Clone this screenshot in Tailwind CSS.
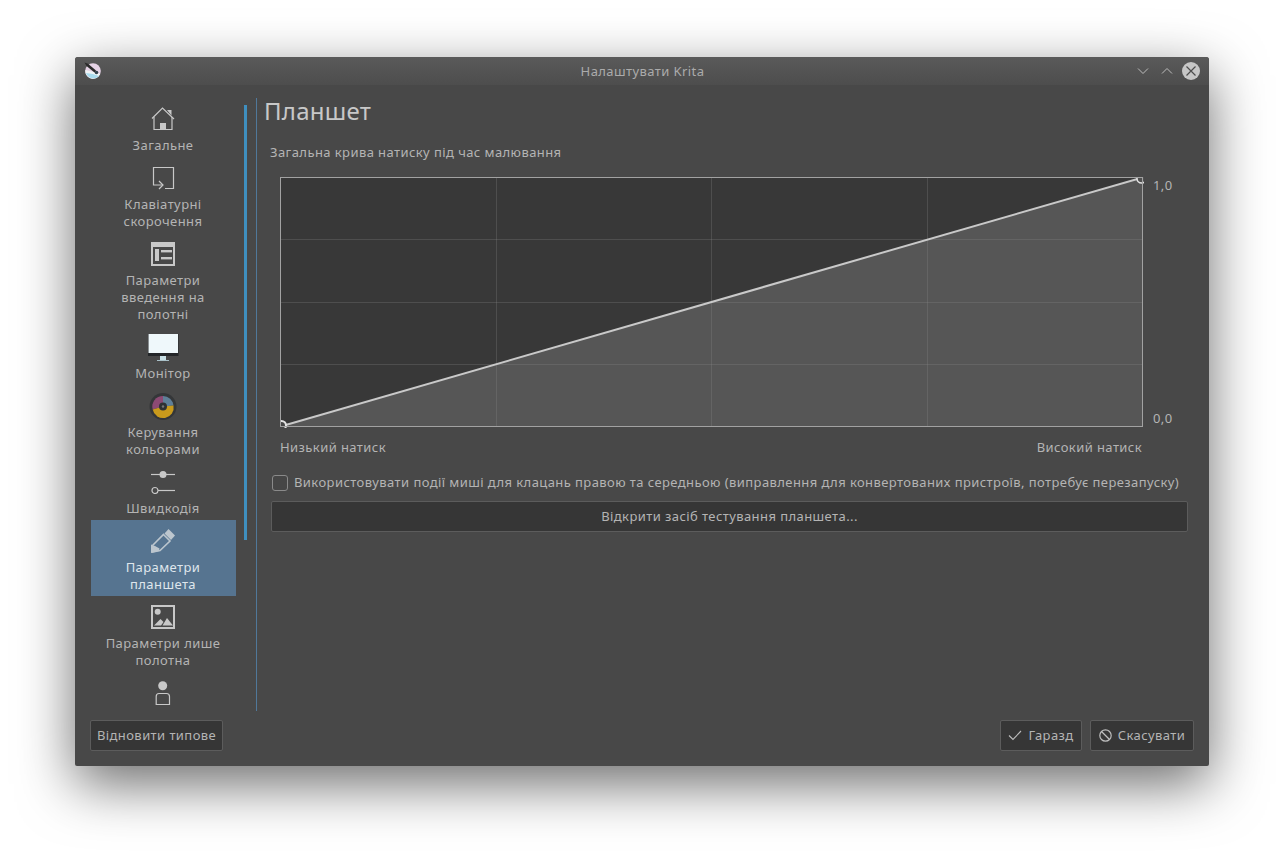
<!DOCTYPE html>
<html>
<head>
<meta charset="utf-8">
<script src="https://cdn.jsdelivr.net/npm/@tailwindcss/browser@4"></script>
</head>
<body class="w-[1284px] h-[859px] overflow-hidden bg-white font-['Noto_Sans',sans-serif] text-[13px] leading-[17px] tracking-[0.42px] text-[#b4b4b4]">
<div class="ml-[75px] mt-[57px] w-[1134px] h-[709px] flex flex-col bg-[#484848] rounded-t-[3px] rounded-b-[2px] shadow-[0_18px_55px_rgba(0,0,0,0.58)]">
  <!-- title bar -->
  <div class="h-[28px] shrink-0 flex items-center pl-[10px] pr-[9px] rounded-t-[3px] bg-gradient-to-b from-[#5a5a5a] to-[#4d4d4d]">
    <div class="flex-1 flex items-center">
      <svg class="w-[16px] h-[16px] overflow-visible" viewBox="0 0 16 16"><circle cx="8" cy="8" r="7.8" fill="#e6d3e6"/><path d="M0.3 7A7.8 7.8 0 0 0 15.2 11L9 9Z" fill="#f0f4f6"/><path d="M1 10A7.8 7.8 0 0 0 14 13L8 11Z" fill="#a9dbee"/><path d="M-0.5 -0.5L3 0.8L11 7.5L9.5 9.5L1.5 3Z" fill="#2a2a2a"/><circle cx="11.5" cy="9.5" r="1.8" fill="#33414d"/></svg>
    </div>
    <div class="text-center text-[#ababab]">Налаштувати Krita</div>
    <div class="flex-1 flex items-center justify-end">
      <svg class="w-[12px] h-[8px] mr-[12px]" viewBox="0 0 12 8" fill="none" stroke="#bdbdbd"><path d="M1 1.5L6 6.5L11 1.5"/></svg>
      <svg class="w-[12px] h-[8px] mr-[9px]" viewBox="0 0 12 8" fill="none" stroke="#bdbdbd"><path d="M1 6.5L6 1.5L11 6.5"/></svg>
      <svg class="w-[18px] h-[18px]" viewBox="0 0 18 18"><circle cx="9" cy="9" r="9" fill="#c6c6c6"/><path d="M4.5 4.5L13.5 13.5M13.5 4.5L4.5 13.5" stroke="#4c4c4c" stroke-width="1.2"/></svg>
    </div>
  </div>
  <!-- main row -->
  <div class="h-[613px] mt-[13px] ml-[16px] shrink-0 flex">
    <div class="w-[145px] shrink-0 overflow-hidden flex flex-col text-center">
      <div class="shrink-0 pt-[9px] pb-[3px] pr-[1px] flex flex-col items-center gap-[6px]">
        <svg class="w-[24px] h-[24px]" viewBox="0 0 24 24" fill="none" stroke="#c8c8c8" stroke-width="1.2"><path d="M1 11.5L11.5 1L23 12"/><path d="M3 10V22.5H21V10"/><path d="M16 3H20.5V8.5Z" fill="#c8c8c8" stroke="none"/><rect x="9" y="16" width="6" height="6.5" fill="#c8c8c8" stroke="none"/></svg>
        <div>Загальне</div>
      </div>
      <div class="shrink-0 pt-[9px] pb-[3px] pr-[1px] flex flex-col items-center gap-[6px]">
        <svg class="w-[24px] h-[24px]" viewBox="0 0 24 24" fill="none" stroke="#c8c8c8" stroke-width="1.2"><path d="M14 22.5H22.5V1.5H2.5V19H12"/><path d="M8 15L12 19L8 23"/></svg>
        <div>Клавіатурні<br>скорочення</div>
      </div>
      <div class="shrink-0 pt-[9px] pb-[3px] pr-[1px] flex flex-col items-center gap-[6px]">
        <svg class="w-[24px] h-[24px]" viewBox="0 0 24 24"><rect width="24" height="24" fill="#c8c8c8"/><rect x="2" y="5" width="20" height="17" fill="#484848"/><rect x="4" y="7" width="4" height="12" fill="#c8c8c8"/><rect x="10" y="8" width="11" height="2.4" fill="#c8c8c8"/><rect x="10" y="15" width="11" height="2.4" fill="#c8c8c8"/></svg>
        <div>Параметри<br>введення на<br>полотні</div>
      </div>
      <div class="shrink-0 pt-[9px] pb-[3px] pr-[1px] flex flex-col items-center gap-[6px]">
        <svg class="w-[32px] h-[24px] overflow-visible" viewBox="0 1 32 24"><rect x="1" y="0" width="30.5" height="22" fill="#232629"/><rect x="1.5" y="0" width="29.5" height="19" fill="#eff8fb"/><rect x="13" y="22" width="6" height="4" fill="#c8e0e6"/><rect x="10" y="26" width="12" height="1" fill="#a9c0c8"/></svg>
        <div>Монітор</div>
      </div>
      <div class="shrink-0 pt-[9px] pb-[3px] pr-[1px] flex flex-col items-center gap-[6px]">
        <svg class="w-[28px] h-[24px] overflow-visible" viewBox="0 0 28 24"><circle cx="14" cy="12.5" r="13.5" fill="#343638"/><path d="M14 12.5L3.7 15.5A10.5 10.5 0 0 1 14 2Z" fill="#8c4a74"/><path d="M14 12.5V2A10.5 10.5 0 0 1 24.5 11.5Z" fill="#5f7f98"/><path d="M14 12.5L24.5 11.5A10.5 10.5 0 0 1 3.7 15.5Z" fill="#c99a1c"/><circle cx="14" cy="12.5" r="4" fill="#2f3133"/><circle cx="14" cy="12.5" r="1.2" fill="#777"/></svg>
        <div>Керування<br>кольорами</div>
      </div>
      <div class="shrink-0 pt-[9px] pb-[3px] pr-[1px] flex flex-col items-center gap-[6px]">
        <svg class="w-[24px] h-[24px]" viewBox="0 0 24 24" fill="none" stroke="#c8c8c8" stroke-width="1.2"><path d="M0 4.5H24"/><circle cx="12" cy="4.5" r="3.5" fill="#c8c8c8" stroke="none"/><path d="M7 20.5H24"/><circle cx="4" cy="20.5" r="3"/></svg>
        <div>Швидкодія</div>
      </div>
      <div class="shrink-0 pt-[9px] pb-[3px] pr-[1px] flex flex-col items-center gap-[6px] bg-[#567490] text-[#dfe6ec]">
        <svg class="w-[24px] h-[24px]" viewBox="0 0 24 24" fill="none"><path d="M17.5 0L24 6.5L20 11L13.5 4.5Z" fill="#bcc6ce"/><path d="M12.5 5.5L19 12L9 21.5L1.5 23V16.5Z" stroke="#bcc6ce" stroke-width="1.6"/><path d="M0 24V15.5L4 17L8.5 19.5L8 22Z" fill="#bcc6ce"/></svg>
        <div>Параметри<br>планшета</div>
      </div>
      <div class="shrink-0 pt-[9px] pb-[3px] pr-[1px] flex flex-col items-center gap-[6px]">
        <svg class="w-[24px] h-[24px]" viewBox="0 0 24 24"><rect x="1" y="1" width="22" height="22" fill="none" stroke="#c8c8c8" stroke-width="2"/><circle cx="6.7" cy="6.7" r="3" fill="#c8c8c8"/><path d="M3 20.5L9.5 14L12.5 17L10 20.5Z" fill="#c8c8c8"/><path d="M11.5 20.5L16 13L22 20.5Z" fill="#c8c8c8"/></svg>
        <div>Параметри лише<br>полотна</div>
      </div>
      <div class="shrink-0 pt-[9px] pb-[3px] pr-[1px] flex flex-col items-center gap-[6px]">
        <svg class="w-[24px] h-[24px]" viewBox="0 0 24 24"><circle cx="11.7" cy="4.7" r="4.5" fill="#c8c8c8"/><path d="M5.2 23.5V15.5Q5.2 12.5 8 12.5H15.5Q18.5 12.5 18.5 15.5V23.5Z" fill="none" stroke="#c8c8c8" stroke-width="1.2"/></svg>
      </div>
    </div>
    <!-- scrollbar -->
    <div class="w-[3px] h-[435px] ml-[8px] mt-[7px] shrink-0 bg-[#3f8fbf]"></div>
    <div class="w-[1px] ml-[9px] shrink-0 bg-[#50789a]"></div>
    <!-- content -->
    <div class="ml-[7px] flex-1 flex flex-col min-w-0">
      <div class="text-[24px] leading-[30px] -mt-[2px] tracking-[0.25px] text-[#c8c8c8]">Планшет</div>
      <div class="ml-[6px] mt-[18px]">Загальна крива натиску під час малювання</div>
      <div class="ml-[16px] mt-[16px] flex">
        <svg class="w-[864px] h-[251px] shrink-0" viewBox="0 0 864 251">
          <rect x="0.5" y="0.5" width="862" height="249" fill="#383838"/>
          <path d="M0.5 249.5L862.5 0.5V249.5Z" fill="#565656"/>
          <path d="M216.5 0V250M431.5 0V250M647.5 0V250M0 62.5H863M0 125.5H863M0 187.5H863" stroke="#8a8a8a" stroke-opacity="0.28" fill="none"/>
          <path d="M0.5 249.5L862.5 0.5" stroke="#c9c9c9" stroke-width="2" fill="none"/>
          <circle cx="1.5" cy="248.5" r="4.5" fill="#484848" stroke="#e4e4e4" stroke-width="2"/>
          <circle cx="861.5" cy="1.5" r="4.5" fill="#505050" stroke="#e4e4e4" stroke-width="1.5"/>
          <rect x="0.5" y="0.5" width="862" height="249" fill="none" stroke="#a2a2a2"/>
        </svg>
        <div class="ml-[9px] flex flex-col justify-between h-[250px]">
          <div>1,0</div>
          <div>0,0</div>
        </div>
      </div>
      <div class="ml-[16px] w-[862px] mt-[11px] flex justify-between">
        <div>Низький натиск</div>
        <div>Високий натиск</div>
      </div>
      <div class="ml-[8px] mt-[18px] flex items-center gap-[6px] h-[17px]">
        <div class="w-[16px] h-[16px] rounded-[3px] border border-[#8a8a8a] bg-[#464646]"></div>
        <div class="whitespace-nowrap">Використовувати події миші для клацань правою та середньою (виправлення для конвертованих пристроїв, потребує перезапуску)</div>
      </div>
      <div class="ml-[7px] mt-[10px] w-[917px] h-[31px] pb-[1px] flex items-center justify-center rounded-[2px] border border-[#5c5c5c] bg-[#363636]">Відкрити засіб тестування планшета...</div>
    </div>
  </div>
  <!-- footer -->
  <div class="mt-[9px] ml-[15px] mr-[15px] flex items-start">
    <div class="w-[133px] h-[31px] pb-[1px] flex items-center justify-center rounded-[2px] border border-[#5c5c5c] bg-[#363636]">Відновити типове</div>
    <div class="ml-auto w-[82px] h-[31px] pb-[1px] flex items-center justify-center gap-[6px] rounded-[2px] border border-[#5c5c5c] bg-[#363636]">
      <svg class="w-[14px] h-[14px]" viewBox="0 0 14 14" fill="none" stroke="#bdbdbd" stroke-width="1.1"><path d="M1 7.5L5 11.5L13 3"/></svg>
      <span>Гаразд</span>
    </div>
    <div class="ml-[8px] w-[104px] h-[31px] pb-[1px] flex items-center justify-center gap-[6px] rounded-[2px] border border-[#5c5c5c] bg-[#363636]">
      <svg class="w-[13px] h-[13px]" viewBox="0 0 13 13" fill="none" stroke="#bdbdbd" stroke-width="1.2"><circle cx="6.5" cy="6.5" r="5.7"/><path d="M2.5 2.5L10.5 10.5"/></svg>
      <span>Скасувати</span>
    </div>
  </div>
</div>
</body>
</html>
